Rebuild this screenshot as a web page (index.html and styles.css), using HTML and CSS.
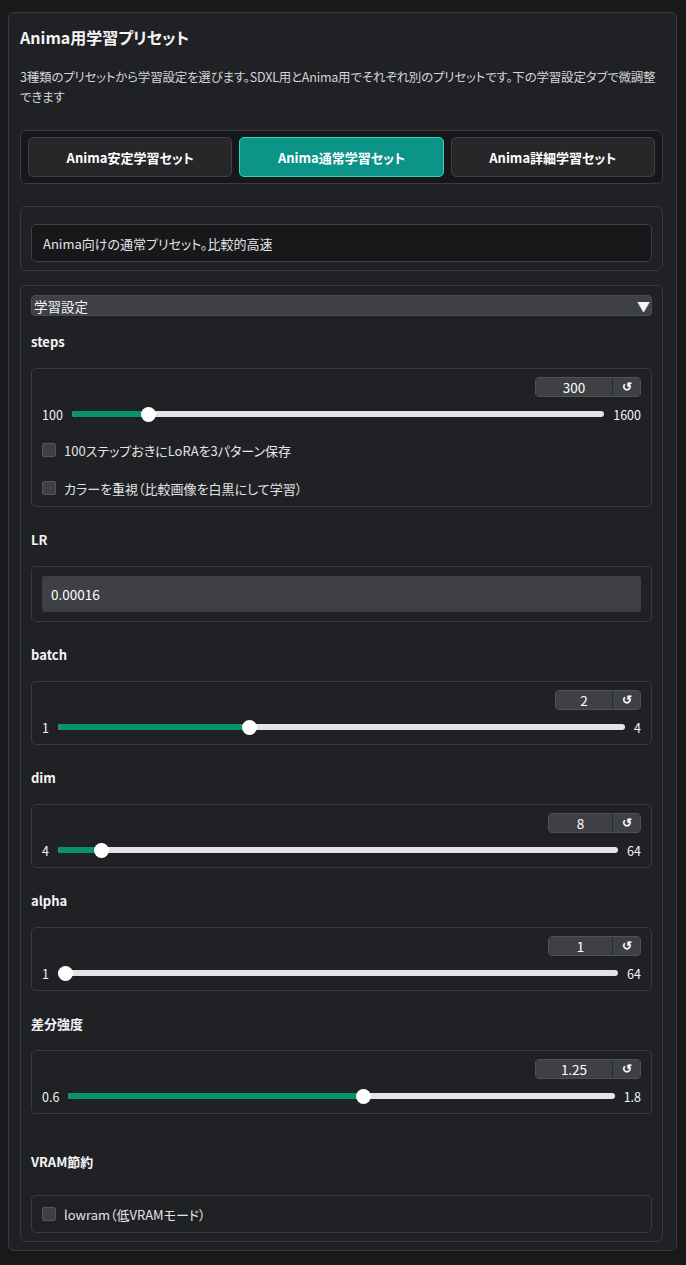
FILE: index.html
```html
<!DOCTYPE html>
<html lang="ja">
<head>
  <meta charset="utf-8">
  <link rel="stylesheet" href="styles.css">
</head>
<body>

<div class="panel">
  <h2 class="panel-title">Anima用学習プリセット</h2>
  <p class="panel-desc">3種類のプリセットから学習設定を選びます。SDXL用とAnima用でそれぞれ別のプリセットです。下の学習設定タブで微調整できます</p>

  <div class="preset-group">
    <button class="preset-btn">Anima安定学習セット</button>
    <button class="preset-btn active">Anima通常学習セット</button>
    <button class="preset-btn">Anima詳細学習セット</button>
  </div>

  <div class="block info-block">
    <div class="info-box">Anima向けの通常プリセット。比較的高速</div>
  </div>

  <div class="block accordion">
    <div class="accordion-head">
      <span>学習設定</span>
      <span class="caret">▼</span>
    </div>

    <div class="field first">
      <div class="field-label">steps</div>
      <div class="field-box">
        <div class="num-row">
          <div class="num-wrap">
            <input class="num-input" type="text" value="300" style="width:76px">
            <button class="reset-btn">↺</button>
          </div>
        </div>
        <div class="slider-row">
          <span class="range-end">100</span>
          <div class="track">
            <div class="fill" style="--p:0.1333"></div>
            <div class="thumb" style="--p:0.1333"></div>
          </div>
          <span class="range-end">1600</span>
        </div>
        <div class="check-list">
          <label class="check-row"><span class="check"></span>100ステップおきにLoRAを3パターン保存</label>
          <label class="check-row"><span class="check"></span>カラーを重視（比較画像を白黒にして学習）</label>
        </div>
      </div>
    </div>

    <div class="field">
      <div class="field-label">LR</div>
      <div class="field-box text-box">
        <input class="text-input" type="text" value="0.00016">
      </div>
    </div>

    <div class="field">
      <div class="field-label">batch</div>
      <div class="field-box">
        <div class="num-row">
          <div class="num-wrap">
            <input class="num-input" type="text" value="2" style="width:56px">
            <button class="reset-btn">↺</button>
          </div>
        </div>
        <div class="slider-row">
          <span class="range-end">1</span>
          <div class="track">
            <div class="fill" style="--p:0.3333"></div>
            <div class="thumb" style="--p:0.3333"></div>
          </div>
          <span class="range-end">4</span>
        </div>
      </div>
    </div>

    <div class="field">
      <div class="field-label">dim</div>
      <div class="field-box">
        <div class="num-row">
          <div class="num-wrap">
            <input class="num-input" type="text" value="8" style="width:63px">
            <button class="reset-btn">↺</button>
          </div>
        </div>
        <div class="slider-row">
          <span class="range-end">4</span>
          <div class="track">
            <div class="fill" style="--p:0.0667"></div>
            <div class="thumb" style="--p:0.0667"></div>
          </div>
          <span class="range-end">64</span>
        </div>
      </div>
    </div>

    <div class="field">
      <div class="field-label">alpha</div>
      <div class="field-box">
        <div class="num-row">
          <div class="num-wrap">
            <input class="num-input" type="text" value="1" style="width:63px">
            <button class="reset-btn">↺</button>
          </div>
        </div>
        <div class="slider-row">
          <span class="range-end">1</span>
          <div class="track">
            <div class="fill" style="--p:0"></div>
            <div class="thumb" style="--p:0"></div>
          </div>
          <span class="range-end">64</span>
        </div>
      </div>
    </div>

    <div class="field">
      <div class="field-label">差分強度</div>
      <div class="field-box">
        <div class="num-row">
          <div class="num-wrap">
            <input class="num-input" type="text" value="1.25" style="width:76px">
            <button class="reset-btn">↺</button>
          </div>
        </div>
        <div class="slider-row">
          <span class="range-end">0.6</span>
          <div class="track">
            <div class="fill" style="--p:0.5417"></div>
            <div class="thumb" style="--p:0.5417"></div>
          </div>
          <span class="range-end">1.8</span>
        </div>
      </div>
    </div>

    <div class="field group-start">
      <div class="field-label">VRAM節約</div>
      <div class="field-box check-box">
        <label class="check-row"><span class="check"></span>lowram（低VRAMモード）</label>
      </div>
    </div>
  </div>
</div>

</body>
</html>
```

FILE: styles.css
```css
body {
  margin: 0;
  padding: 12px 9px 13px 8px;
  background-color: #19191c;
  color: #f4f4f5;
  font-family: "Noto Sans CJK JP", "Noto Sans", sans-serif;
  font-feature-settings: "palt";
}

.panel {
  background-color: #202124;
  border: 1px solid #3a3a3f;
  border-radius: 6px;
  padding: 12px 13px 8px 11px;
}

.panel-title {
  margin: 0;
  font-size: 16px;
  line-height: 24px;
  font-weight: bold;
}

.panel-desc {
  margin: 18px 0 0;
  font-size: 12.5px;
  letter-spacing: -0.2px;
  line-height: 20px;
  color: #d4d4d8;
}

/* preset buttons */
.preset-group {
  display: flex;
  gap: 7px;
  margin-top: 23px;
  padding: 6px 7px;
  background-color: #17171a;
  border: 1px solid #3a3a3f;
  border-radius: 6px;
}

.preset-btn {
  flex: 1;
  height: 40px;
  background-color: #27272a;
  color: #fff;
  border: 1px solid #3f3f46;
  border-radius: 5px;
  font-family: inherit;
  font-feature-settings: "palt";
  font-size: 13px;
  font-weight: bold;
}

.preset-btn.active {
  background-color: #0d9488;
  border-color: #2dd4bf;
}

.block {
  border: 1px solid #3a3a3f;
  border-radius: 6px;
}

.info-block {
  margin-top: 22px;
  padding: 17px 10px 8px;
}

.info-box {
  height: 38px;
  box-sizing: border-box;
  padding: 0 11px;
  display: flex;
  align-items: center;
  background-color: #18181b;
  border: 1px solid #3f3f46;
  border-radius: 5px;
  font-size: 13px;
  color: #e4e4e7;
}

/* settings accordion */
.accordion {
  margin-top: 14px;
  padding: 9px 10px 8px;
}

.accordion-head {
  height: 21px;
  box-sizing: border-box;
  display: flex;
  align-items: center;
  justify-content: space-between;
  padding: 0 1px 0 2px;
  background-color: #3f4046;
  border: 1px solid #4b4c52;
  border-radius: 4px;
  font-size: 13.5px;
}

.caret {
  font-size: 13px;
  line-height: 1;
}

.field {
  margin-top: 24px;
}

.field.first {
  margin-top: 17px;
}

.field.group-start {
  margin-top: 39px;
}

.field-label {
  font-size: 13px;
  line-height: 18px;
  font-weight: bold;
  margin-bottom: 17px;
}

.group-start .field-label {
  margin-bottom: 24px;
}

.field-box {
  border: 1px solid #3a3a3f;
  border-radius: 5px;
  padding: 8px 10px;
}

.num-row {
  display: flex;
  justify-content: flex-end;
}

.num-wrap {
  display: flex;
  height: 20px;
  border: 1px solid #505056;
  border-radius: 4px;
  overflow: hidden;
  box-sizing: border-box;
}

.num-input {
  box-sizing: border-box;
  height: 100%;
  border: none;
  padding: 0;
  background-color: #3f4046;
  color: #fff;
  text-align: center;
  font-family: inherit;
  font-size: 13.5px;
}

.reset-btn {
  width: 28px;
  height: 100%;
  border: none;
  border-left: 1px solid #2a2a2e;
  padding: 0;
  background-color: #3f4046;
  color: #fff;
  font-size: 12px;
  font-weight: bold;
}

.slider-row {
  display: flex;
  align-items: center;
  height: 18px;
  margin-top: 8px;
  font-size: 12.5px;
}

.track {
  position: relative;
  flex: 1;
  height: 6px;
  margin: 0 9px;
  background-color: #e4e4e7;
  border-radius: 3px;
}

.fill {
  height: 100%;
  width: calc(7.5px + (100% - 15px) * var(--p));
  background-color: #0a936b;
  border-radius: 3px;
}

.thumb {
  position: absolute;
  top: -4.5px;
  left: calc((100% - 15px) * var(--p));
  width: 15px;
  height: 15px;
  border-radius: 50%;
  background-color: #fff;
}

.check-list {
  display: flex;
  flex-direction: column;
  gap: 18px;
  margin-top: 17px;
}

.check-row {
  display: flex;
  align-items: center;
  gap: 8px;
  height: 20px;
  font-size: 13px;
  color: #e4e4e7;
}

.check {
  width: 14px;
  height: 14px;
  box-sizing: border-box;
  background-color: #3f3f46;
  border: 1px solid #55555c;
  border-radius: 2px;
}

.text-box {
  padding: 9px 10px;
}

.text-input {
  display: block;
  width: 100%;
  height: 36px;
  box-sizing: border-box;
  padding: 0 9px;
  border: none;
  border-radius: 3px;
  background-color: #3f4046;
  color: #fff;
  font-family: inherit;
  font-size: 13.5px;
}

.check-box {
  padding: 8px 10px;
}
```
